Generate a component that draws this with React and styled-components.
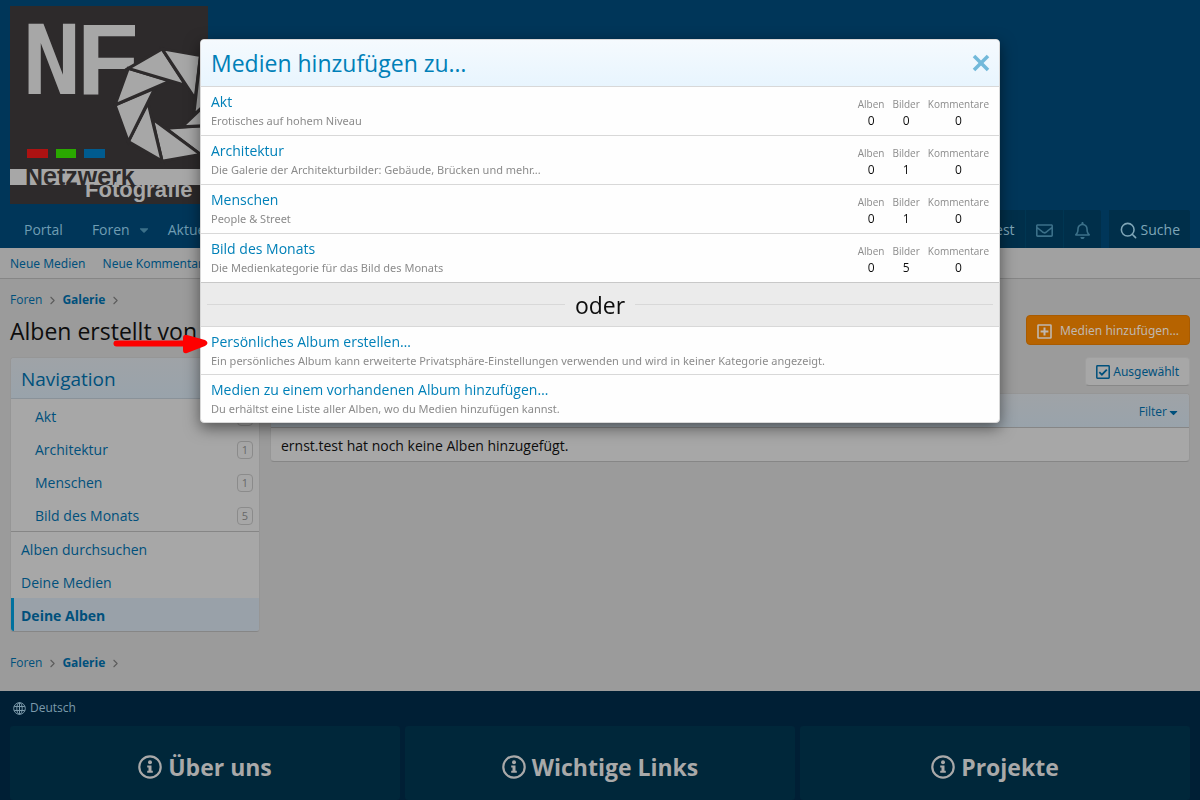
import React from 'react'
import styled, { createGlobalStyle } from 'styled-components'
import { FaRegEnvelope, FaRegBell, FaCaretDown } from 'react-icons/fa'
import { Search, ChevronRight, X } from 'lucide-react'

const smallFont = "'Noto Sans', 'Open Sans', sans-serif"

const GlobalStyle = createGlobalStyle`
  *, *::before, *::after {
    box-sizing: border-box;
  }

  body {
    margin: 0;
    background: #9b9b9b;
    color: #0d0d0d;
    font-family: 'Open Sans', 'Noto Sans', sans-serif;
    font-size: 14px;
    line-height: 20px;
  }

  a {
    color: #00507c;
    text-decoration: none;
  }

  button {
    font: inherit;
    cursor: pointer;
  }

  h1, h2, h3, p, ul, dl, dd {
    margin: 0;
    padding: 0;
    font-weight: 400;
  }

  ul {
    list-style: none;
  }
`

const Page = styled.div`
  display: flex;
  flex-direction: column;
  min-height: 100vh;
`

const Header = styled.header`
  padding: 6px 10px;
  background: #003659;

  svg {
    display: block;
  }
`

const NavBar = styled.nav`
  display: flex;
  justify-content: space-between;
  height: 38px;
  padding: 0 10px;
  background: #003659;
`

const NavGroup = styled.div`
  display: flex;
  margin-right: ${props => (props.$spaced ? '8px' : '0')};
`

const NavLink = styled.a`
  display: flex;
  align-items: center;
  gap: 7px;
  padding: 2px ${props => (props.$menu ? '3px' : '15px')} 0 14px;
  color: #6f9db3;
`

const VisitorLink = styled.a`
  display: flex;
  align-items: center;
  gap: 3px;
  padding: 2px 10px 0;
  background: #002f4a;
  border-right: 1px solid #003652;
  color: ${props => (props.$muted ? '#3b7089' : '#7fa6b8')};

  &:last-child {
    border-right: 0;
    border-radius: 0 2px 0 0;
  }
`

const SubNav = styled.nav`
  display: flex;
  gap: 17px;
  padding: 6px 10px 4px;
  background: #a1a1a1;
  border-bottom: 1px solid #868686;
  font-family: ${smallFont};
  font-size: 12px;
`

const Content = styled.main`
  flex: 1;
  padding: 0 10px;
`

const Crumbs = styled.ul`
  display: flex;
  align-items: center;
  gap: 3px;
  padding: ${props => (props.$bottom ? '21px 0 18px' : '11px 0 5px')};
  font-size: 12px;

  li {
    display: flex;
    align-items: center;
    gap: 4px;
  }

  li:last-child a {
    font-weight: 700;
  }

  svg {
    color: #5c5c5c;
  }
`

const TitleBar = styled.div`
  display: flex;
  align-items: center;
  justify-content: space-between;
  margin-bottom: 12px;
`

const PageTitle = styled.h1`
  padding-top: 2px;
  font-size: 23px;
  line-height: 28px;
`

const AddButton = styled.button`
  display: flex;
  align-items: center;
  gap: 8px;
  height: 30px;
  padding: 2px 10px 0;
  background: #b66300;
  border: 1px solid #a95b00;
  border-radius: 4px;
  color: #c0b8b0;
  font-family: ${smallFont};
  font-size: 12px;
`

const Columns = styled.div`
  display: flex;
  align-items: flex-start;
  gap: 10px;
`

const Card = styled.section`
  background: #a7a7a7;
  border: 1px solid #969696;
  border-bottom-color: #868686;
  border-radius: 4px;
  overflow: hidden;
`

const Sidebar = styled(Card)`
  flex: 0 0 250px;
`

const SidebarTitle = styled.h3`
  height: 41px;
  padding: 6px 10px;
  background: linear-gradient(#9fa3a7, #99a3ab);
  border-bottom: 1px solid #8a9299;
  color: #00507c;
  font-size: 19px;
  line-height: 30px;
`

const SidebarList = styled.ul`
  & + & {
    border-top: 1px solid #868686;
  }
`

const SidebarLink = styled.a`
  display: flex;
  align-items: center;
  justify-content: space-between;
  height: 33px;
  padding: 2px 6px 0 ${props => (props.$nested ? '24px' : '10px')};

  &[aria-current] {
    padding-left: 7px;
    background: #99a1a9;
    border-left: 3px solid #00719f;
    font-weight: 700;
  }
`

const Badge = styled.span`
  padding: 0 4px;
  border: 1px solid #8b8b8b;
  border-radius: 4px;
  color: #676767;
  font-size: 11px;
  line-height: 16px;
`

const Main = styled.div`
  flex: 1;
  min-width: 0;
`

const Actions = styled.div`
  display: flex;
  justify-content: flex-end;
  margin-bottom: 7px;
`

const SelectButton = styled.button`
  display: flex;
  align-items: center;
  gap: 3px;
  height: 29px;
  padding: 1px 10px 0;
  background: #a7a7a7;
  border: 1px solid #9f9f9f;
  border-bottom-color: #888;
  border-radius: 4px;
  color: #00507c;
  font-family: ${smallFont};
  font-size: 12px;
`

const FilterBar = styled.div`
  display: flex;
  justify-content: flex-end;
  padding: 8px 9px 5px;
  background: linear-gradient(#9fa3a7, #99a3ab);
  border-bottom: 1px solid #868686;
`

const FilterButton = styled.button`
  display: flex;
  align-items: center;
  padding: 0;
  background: none;
  border: 0;
  color: #00507c;
  font-size: 12px;
`

const EmptyRow = styled.p`
  padding: 8px 10px 5px;
`

const Footer = styled.footer`
  padding: 7px 10px 1px;
  background: #001f35;
`

const Language = styled.a`
  display: inline-flex;
  align-items: center;
  gap: 4px;
  padding: 0 3px;
  color: #7c9aab;
  font-size: 12px;
`

const FooterColumns = styled.div`
  display: grid;
  grid-template-columns: repeat(3, 1fr);
  gap: 5px;
  margin-top: 6px;
`

const FooterBox = styled.section`
  padding: 25px 10px 17px;
  background: #00273a;
  border-radius: 3px;
`

const FooterTitle = styled.h3`
  display: flex;
  align-items: center;
  justify-content: center;
  gap: 6px;
  color: #a9a9a9;
  font-size: 23px;
  font-weight: 700;
  line-height: 32px;
`

const Overlay = styled.div`
  position: fixed;
  inset: 0;
  padding: 39px 10px 0;
`

const Dialog = styled.div`
  position: relative;
  max-width: 800px;
  margin: 0 auto;
  background: #fefefe;
  border: 1px solid #d8d8d8;
  border-radius: 4px;
  box-shadow: 0 5px 15px rgba(0, 0, 0, 0.5);
`

const DialogHeader = styled.div`
  display: flex;
  align-items: center;
  justify-content: space-between;
  height: 46px;
  padding: 0 10px;
  background: linear-gradient(#f5fafe, #e8f5fe);
  border-radius: 3px 3px 0 0;
  color: #0080b8;
`

const DialogTitle = styled.h2`
  font-size: 23px;
  line-height: 32px;
`

const CloseButton = styled.button`
  display: flex;
  padding: 0;
  margin-right: -6px;
  background: none;
  border: 0;
  color: #72b9da;
`

const Row = styled.div`
  display: flex;
  justify-content: space-between;
  height: ${props => (props.$short ? '48px' : '49px')};
  padding: 5px 10px 0;
  border-top: 1px solid #d8d8d8;
`

const RowTitle = styled.h3`
  font-size: 14px;

  a {
    color: #0080b8;
  }
`

const RowText = styled.p`
  color: #8b8b8b;
  font-family: ${smallFont};
  font-size: 11px;
  line-height: 17px;
`

const Stats = styled.div`
  display: flex;
  gap: 8px;
  padding-top: 4px;
`

const Stat = styled.dl`
  text-align: center;

  dt {
    color: #8b8b8b;
    font-size: 10px;
    line-height: 16px;
  }

  dd {
    font-size: 12px;
    line-height: 17px;
  }
`

const Divider = styled.div`
  display: flex;
  align-items: center;
  gap: 10px;
  height: 44px;
  padding: 0 6px;
  background: #ebebeb;
  border-top: 1px solid #c8c8c8;
  font-size: 23px;

  &::before,
  &::after {
    content: '';
    flex: 1;
    border-top: 1px solid #d8d8d8;
  }
`

// points at the "personal album" entry from outside the dialog
const Pointer = styled.svg`
  position: absolute;
  left: -88px;
  top: 291px;
  pointer-events: none;
`

const blades = Array.from({ length: 9 }, (_, i) => {
  const point = (deg, r) => {
    const a = (deg * Math.PI) / 180
    return `${162 + r * Math.cos(a)},${99 + r * Math.sin(a)}`
  }
  const start = 20 + i * 40
  return [point(start, 57), point(start + 40, 57), point(start + 85, 24)].join(' ')
})

const Logo = () => (
  <svg width="198" height="198" viewBox="0 0 198 198" role="img" aria-label="Netzwerk Fotografie">
    <rect width="198" height="198" fill="#2d2a2b" />
    <g fill="#a7a7a7" fontFamily="Liberation Sans" fontWeight="700">
      <text x="13" y="88" fontSize="96" fontFamily="DejaVu Sans Mono">N</text>
      <text x="67" y="88" fontSize="101">F</text>
      <g stroke="#2d2a2b" strokeWidth="3">
        {blades.map(points => (
          <polygon key={points} points={points} />
        ))}
      </g>
      <rect y="163" width="198" height="16" />
      <text x="15" y="179" fontSize="25" fill="#2d2a2b">Netzwerk</text>
      <text x="75" y="191" fontSize="22">Fotografie</text>
    </g>
    <rect x="17" y="143" width="21" height="9" fill="#ad1212" />
    <rect x="46" y="143" width="20" height="9" fill="#2aa800" />
    <rect x="74" y="143" width="21" height="9" fill="#005b8f" />
  </svg>
)

const InfoIcon = () => (
  <svg width="24" height="24" viewBox="0 0 24 24" aria-hidden="true">
    <circle cx="12" cy="12" r="10.7" fill="none" stroke="currentColor" strokeWidth="2.2" />
    <circle cx="12" cy="7.2" r="2" fill="currentColor" />
    <path d="M9.2 10.4h4.3v5.4h1.3v2H9.2v-2h1.3v-3.4H9.2z" fill="currentColor" />
  </svg>
)

const GlobeIcon = () => (
  <svg width="13" height="13" viewBox="0 0 13 13" fill="none" stroke="currentColor" aria-hidden="true">
    <circle cx="6.5" cy="6.5" r="5.8" />
    <ellipse cx="6.5" cy="6.5" rx="2.7" ry="5.8" />
    <path d="M6.5.7v11.6M1.2 4.5h10.6M1.2 8.5h10.6" />
  </svg>
)

const PlusIcon = () => (
  <svg width="15" height="15" viewBox="0 0 15 15" fill="none" stroke="currentColor" strokeWidth="1.6" aria-hidden="true">
    <rect x="1" y="1" width="13" height="13" rx="0.6" />
    <path d="M7.5 3.6v7.8M3.6 7.5h7.8" strokeWidth="2" />
  </svg>
)

const CheckIcon = () => (
  <svg width="14" height="14" viewBox="0 0 14 14" fill="none" stroke="currentColor" strokeWidth="1.5" aria-hidden="true">
    <rect x="0.8" y="0.8" width="12.4" height="12.4" rx="0.6" />
    <path d="M3.3 7.2l2.6 2.5 4.9-5" strokeWidth="1.8" />
  </svg>
)

const Breadcrumbs = ({ bottom }) => (
  <Crumbs $bottom={bottom}>
    <li>
      <a href="#foren">Foren</a>
      <ChevronRight size={13} />
    </li>
    <li>
      <a href="#galerie">Galerie</a>
      <ChevronRight size={13} />
    </li>
  </Crumbs>
)

const categories = [
  { name: 'Akt', text: 'Erotisches auf hohem Niveau', images: 0 },
  {
    name: 'Architektur',
    text: 'Die Galerie der Architekturbilder: Gebäude, Brücken und mehr...',
    images: 1,
  },
  { name: 'Menschen', text: 'People & Street', images: 1 },
  { name: 'Bild des Monats', text: 'Die Medienkategorie für das Bild des Monats', images: 5 },
]

const albumOptions = [
  {
    name: 'Persönliches Album erstellen…',
    text: 'Ein persönliches Album kann erweiterte Privatsphäre-Einstellungen verwenden und wird in keiner Kategorie angezeigt.',
  },
  {
    name: 'Medien zu einem vorhandenen Album hinzufügen…',
    text: 'Du erhältst eine Liste aller Alben, wo du Medien hinzufügen kannst.',
  },
]

const Entry = ({ name, text, short, children }) => (
  <Row $short={short}>
    <div>
      <RowTitle>
        <a href="#add">{name}</a>
      </RowTitle>
      <RowText>{text}</RowText>
    </div>
    {children}
  </Row>
)

const AddMediaDialog = () => (
  <Overlay>
    <Dialog role="dialog" aria-labelledby="dialog-title">
      <DialogHeader>
        <DialogTitle id="dialog-title">Medien hinzufügen zu…</DialogTitle>
        <CloseButton aria-label="Schließen">
          <X size={28} strokeWidth={3} strokeLinecap="butt" />
        </CloseButton>
      </DialogHeader>
      {categories.map(({ name, text, images }) => (
        <Entry key={name} name={name} text={text}>
          <Stats>
            <Stat>
              <dt>Alben</dt>
              <dd>0</dd>
            </Stat>
            <Stat>
              <dt>Bilder</dt>
              <dd>{images}</dd>
            </Stat>
            <Stat>
              <dt>Kommentare</dt>
              <dd>0</dd>
            </Stat>
          </Stats>
        </Entry>
      ))}
      <Divider>oder</Divider>
      {albumOptions.map(option => (
        <Entry key={option.name} short {...option} />
      ))}
      <Pointer width="96" height="26" viewBox="0 0 96 26" aria-hidden="true">
        <path d="M3.500 12.500H72" stroke="#fe0000" strokeWidth="6" strokeLinecap="round" />
        <path
          d="M72 4Q70 4 70 7V19Q70 23 74 22L92 15Q97 12 92 9L74 4Z"
          fill="#fe0000"
        />
      </Pointer>
    </Dialog>
  </Overlay>
)

const App = () => (
  <Page>
    <GlobalStyle />
    <Header>
      <Logo />
    </Header>
    <NavBar>
      <NavGroup>
        <NavLink href="#portal">Portal</NavLink>
        <NavLink href="#foren" $menu>
          Foren <FaCaretDown size={14} color="#3b7089" />
        </NavLink>
        <NavLink href="#aktuelles">Aktuelles</NavLink>
      </NavGroup>
      <NavGroup>
        <NavGroup $spaced>
          <VisitorLink href="#konto">ernst.test</VisitorLink>
          <VisitorLink href="#mail" aria-label="Unterhaltungen" $muted>
            <FaRegEnvelope size={17} />
          </VisitorLink>
          <VisitorLink href="#alerts" aria-label="Hinweise" $muted>
            <FaRegBell size={17} />
          </VisitorLink>
        </NavGroup>
        <VisitorLink href="#suche">
          <Search size={19} /> Suche
        </VisitorLink>
      </NavGroup>
    </NavBar>
    <SubNav>
      <a href="#medien">Neue Medien</a>
      <a href="#kommentare">Neue Kommentare</a>
    </SubNav>

    <Content>
      <Breadcrumbs />
      <TitleBar>
        <PageTitle>Alben erstellt von ernst.test</PageTitle>
        <AddButton>
          <PlusIcon /> Medien hinzufügen…
        </AddButton>
      </TitleBar>
      <Columns>
        <Sidebar as="aside">
          <SidebarTitle>Navigation</SidebarTitle>
          <SidebarList>
            {categories.map(({ name, images }) => (
              <li key={name}>
                <SidebarLink href="#kategorie" $nested>
                  {name} <Badge>{images}</Badge>
                </SidebarLink>
              </li>
            ))}
          </SidebarList>
          <SidebarList>
            <li>
              <SidebarLink href="#alben">Alben durchsuchen</SidebarLink>
            </li>
            <li>
              <SidebarLink href="#deine-medien">Deine Medien</SidebarLink>
            </li>
            <li>
              <SidebarLink href="#deine-alben" aria-current="page">
                Deine Alben
              </SidebarLink>
            </li>
          </SidebarList>
        </Sidebar>
        <Main>
          <Actions>
            <SelectButton>
              <CheckIcon /> Ausgewählt
            </SelectButton>
          </Actions>
          <Card>
            <FilterBar>
              <FilterButton>
                Filter <FaCaretDown size={13} />
              </FilterButton>
            </FilterBar>
            <EmptyRow>ernst.test hat noch keine Alben hinzugefügt.</EmptyRow>
          </Card>
        </Main>
      </Columns>
      <Breadcrumbs bottom />
    </Content>

    <Footer>
      <Language href="#sprache">
        <GlobeIcon /> Deutsch
      </Language>
      <FooterColumns>
        {['Über uns', 'Wichtige Links', 'Projekte'].map(title => (
          <FooterBox key={title}>
            <FooterTitle>
              <InfoIcon /> {title}
            </FooterTitle>
          </FooterBox>
        ))}
      </FooterColumns>
    </Footer>

    <AddMediaDialog />
  </Page>
)

export default App
